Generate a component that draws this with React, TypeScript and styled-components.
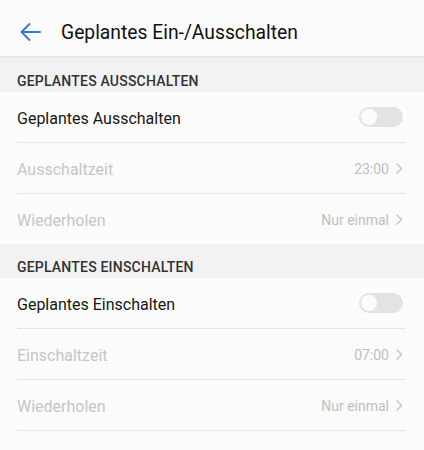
import React from "react";
import styled, { createGlobalStyle } from "styled-components";

const Global = createGlobalStyle`
  html, body { margin: 0; padding: 0; background: #fcfcfc; }
  body { font-family: Roboto, "Noto Sans", "Liberation Sans", sans-serif; -webkit-font-smoothing: antialiased; }
`;

const Page = styled.div`
  width: 424px;
  min-height: 450px;
  background: #fcfcfc;
`;

const Header = styled.header`
  height: 48px;
  padding: 8px 0 0 19px;
  display: flex;
  align-items: center;
  border-bottom: 2px solid #e6e6e6;
  box-sizing: content-box;
  background: #fcfcfc;
`;

const BackButton = styled.button`
  width: 22px;
  height: 20px;
  padding: 0;
  border: 0;
  background: none;
  display: flex;
  align-items: center;
  cursor: pointer;
`;

const Title = styled.h1`
  margin: 0 0 0 20px;
  font-size: 19.3px;
  font-weight: 400;
  color: #111;
`;

const SectionHeader = styled.div`
  height: 34px;
  box-sizing: border-box;
  padding: 13px 0 1px 17px;
  background: #f2f2f2;
  font-size: 14px;
  line-height: 20px;
  font-weight: 500;
  letter-spacing: 0.2px;
  color: #333;
`;

const Row = styled.div<{ $divider: boolean }>`
  height: 50px;
  margin: 0 18px 0 17px;
  padding-right: 3px;
  display: flex;
  align-items: center;
  justify-content: space-between;
  border-bottom: ${(p) => (p.$divider ? "1px solid #e6e6e6" : "none")};
  box-sizing: content-box;
`;

const RowTitle = styled.span<{ $disabled?: boolean }>`
  font-size: 16px;
  padding-top: 2px;
  color: ${(p) => (p.$disabled ? "#c6c6c6" : "#161616")};
`;

const Value = styled.span`
  display: flex;
  align-items: center;
  gap: 7px;
  font-size: 14px;
  padding-top: 1px;
  color: #c0c0c0;
`;

const Toggle = styled.div`
  width: 44px;
  height: 20px;
  border-radius: 10px;
  background: #e3e3e3;
  display: flex;
  align-items: center;
  padding: 0 2px;
  box-sizing: border-box;
`;

const Knob = styled.div`
  width: 16px;
  height: 16px;
  border-radius: 50%;
  background: #fbfbfb;
`;

const Chevron = () => (
  <svg width="7" height="11" viewBox="0 0 7 11" fill="none">
    <path d="M1 1L5.5 5.5L1 10" stroke="#c2c2c2" strokeWidth="1.3" strokeLinecap="round" strokeLinejoin="round" />
  </svg>
);

const BackArrow = () => (
  <svg width="22" height="20" viewBox="0 0 22 20" fill="none">
    <path d="M21 10H2.5M10.5 2L2.5 10L10.5 18" stroke="#3278cf" strokeWidth="1.8" strokeLinecap="round" strokeLinejoin="round" />
  </svg>
);

type Item =
  | { kind: "toggle"; label: string }
  | { kind: "value"; label: string; value: string };

const sections: { title: string; items: Item[]; lastDivider: boolean }[] = [
  {
    title: "GEPLANTES AUSSCHALTEN",
    lastDivider: false,
    items: [
      { kind: "toggle", label: "Geplantes Ausschalten" },
      { kind: "value", label: "Ausschaltzeit", value: "23:00" },
      { kind: "value", label: "Wiederholen", value: "Nur einmal" },
    ],
  },
  {
    title: "GEPLANTES EINSCHALTEN",
    lastDivider: true,
    items: [
      { kind: "toggle", label: "Geplantes Einschalten" },
      { kind: "value", label: "Einschaltzeit", value: "07:00" },
      { kind: "value", label: "Wiederholen", value: "Nur einmal" },
    ],
  },
];

export default function App() {
  return (
    <Page>
      <Global />
      <Header>
        <BackButton aria-label="Zurück">
          <BackArrow />
        </BackButton>
        <Title>Geplantes Ein-/Ausschalten</Title>
      </Header>
      {sections.map((s) => (
        <section key={s.title}>
          <SectionHeader>{s.title}</SectionHeader>
          {s.items.map((it, i) => (
            <Row key={i} $divider={i < s.items.length - 1 || s.lastDivider}>
              <RowTitle $disabled={it.kind === "value"}>{it.label}</RowTitle>
              {it.kind === "toggle" ? (
                <Toggle>
                  <Knob />
                </Toggle>
              ) : (
                <Value>
                  {it.value}
                  <Chevron />
                </Value>
              )}
            </Row>
          ))}
        </section>
      ))}
    </Page>
  );
}
